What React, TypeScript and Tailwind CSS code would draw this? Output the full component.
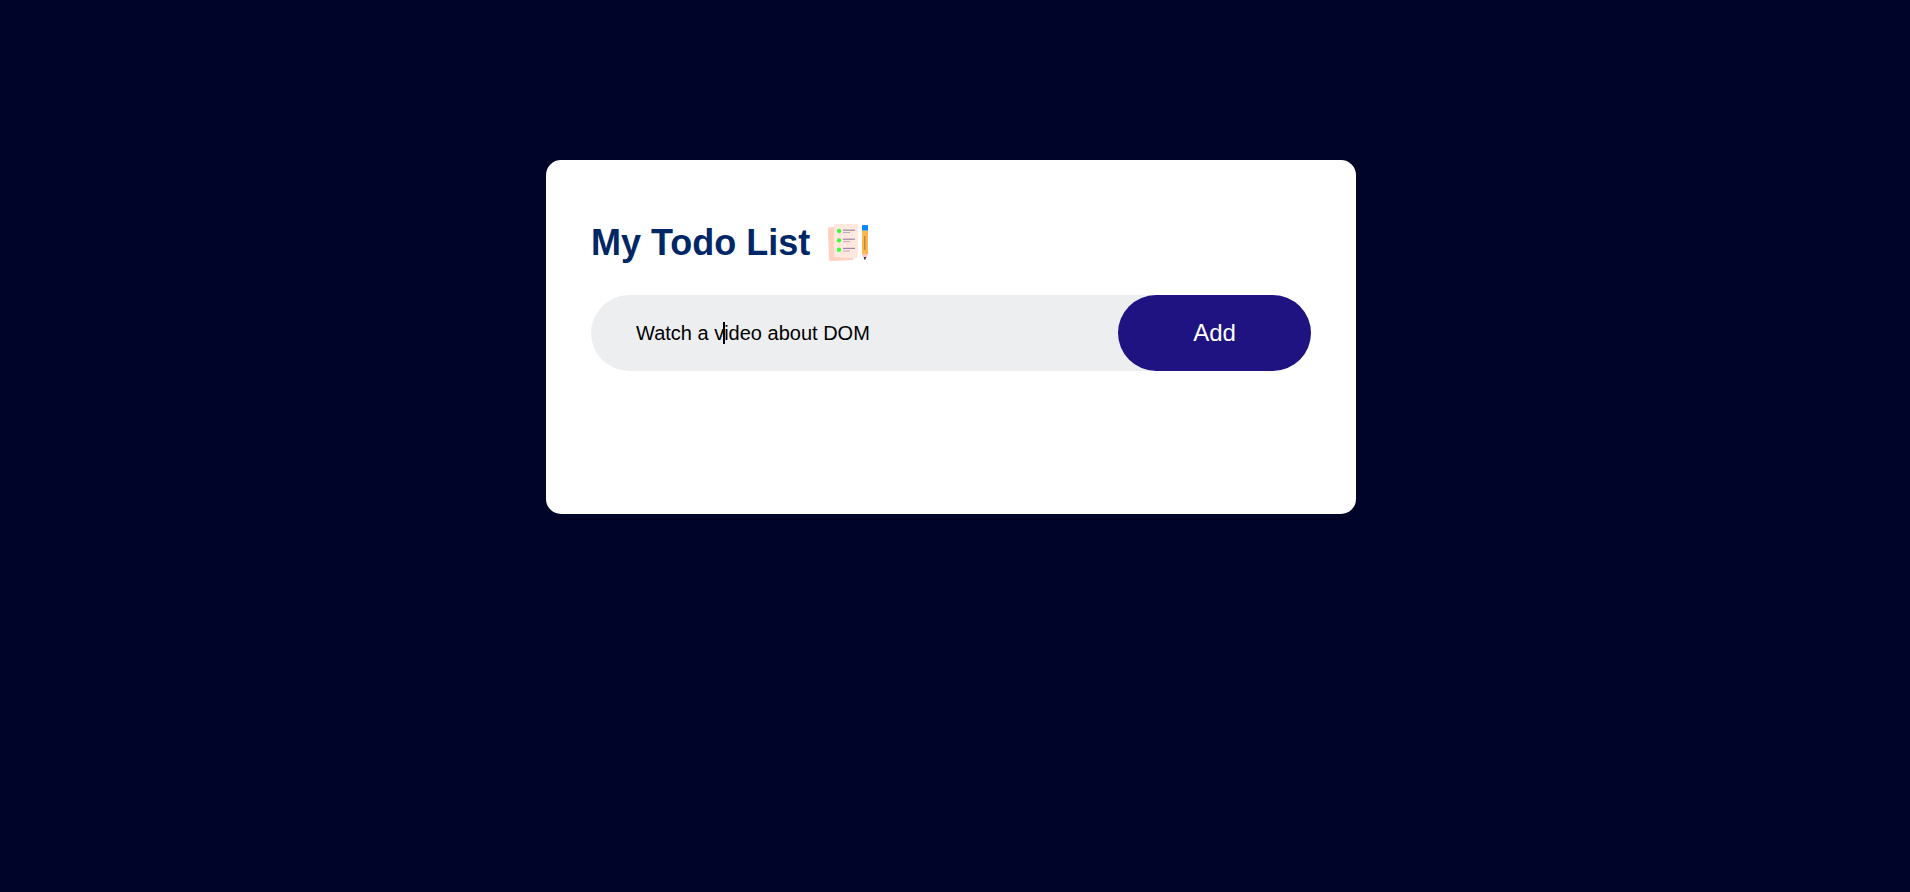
import { useState } from "react";

function ChecklistIcon() {
  return (
    <svg className="h-10 w-11 shrink-0" viewBox="0 0 132 120" aria-hidden="true">
      <path d="M6 17q0-4 4-4h20l53 88q0 10-4 10l-65 3q-5 0-5-5z" fill="#ffcfc1" />
      <path d="M28 3h65q4 0 4 4l-2 95q0 4-4 4l-64-3q-4 0-4-4l1-92q0-4 4-4z" fill="#ffe9de" />
      <g fill="#3dfb35">
        <circle cx="39" cy="24" r="6.5" />
        <circle cx="39" cy="52" r="6.5" />
        <circle cx="39" cy="80" r="6.5" />
      </g>
      <g stroke="#8a6fa3" strokeWidth="3">
        <path d="M51 21.500h36M51 48.500h36M51 76h36" />
      </g>
      <g stroke="#c4a5bd" strokeWidth="3">
        <path d="M51 28.500h21M51 56h21M51 84h21" />
      </g>
      <path d="M108 9q0-3 3-3h12q3 0 3 3v14h-18z" fill="#0488ff" />
      <path d="M108 23h18v71h-18z" fill="#ffb74d" />
      <path d="M116.500 39v41" stroke="#a97a3d" strokeWidth="3.500" />
      <path d="M108 93h18l-5 11h-8z" fill="#f8c5c5" />
      <path d="M113 102h8l-3 8h-3z" fill="#4a3a50" />
    </svg>
  );
}

export default function App() {
  const [task, setTask] = useState("Watch a video about DOM");

  return (
    <main className="min-h-screen bg-[#000428] pt-40 pr-2 font-['Liberation_Sans',Arial,sans-serif]">
      <section className="mx-auto w-full max-w-[810px] rounded-[15px] bg-white px-[45px] pt-[61px] pb-[143px]">
        <h1 className="mb-[30px] flex h-11 items-center gap-4 text-4xl font-bold text-[#002765]">
          My Todo List
          <ChecklistIcon />
        </h1>
        <form
          className="relative flex h-[76px] rounded-full bg-[#edeef0]"
          onSubmit={(event) => event.preventDefault()}
        >
          <input
            type="text"
            aria-label="Task"
            value={task}
            onChange={(event) => setTask(event.target.value)}
            className="min-w-0 flex-1 bg-transparent pl-[45px] text-xl text-black outline-none"
          />
          <span className="pointer-events-none absolute top-[27px] left-[132px] h-[22px] w-0.5 bg-black" />
          <button type="submit" className="w-[193px] rounded-full bg-[#1e1381] text-2xl text-white">
            Add
          </button>
        </form>
      </section>
    </main>
  );
}
